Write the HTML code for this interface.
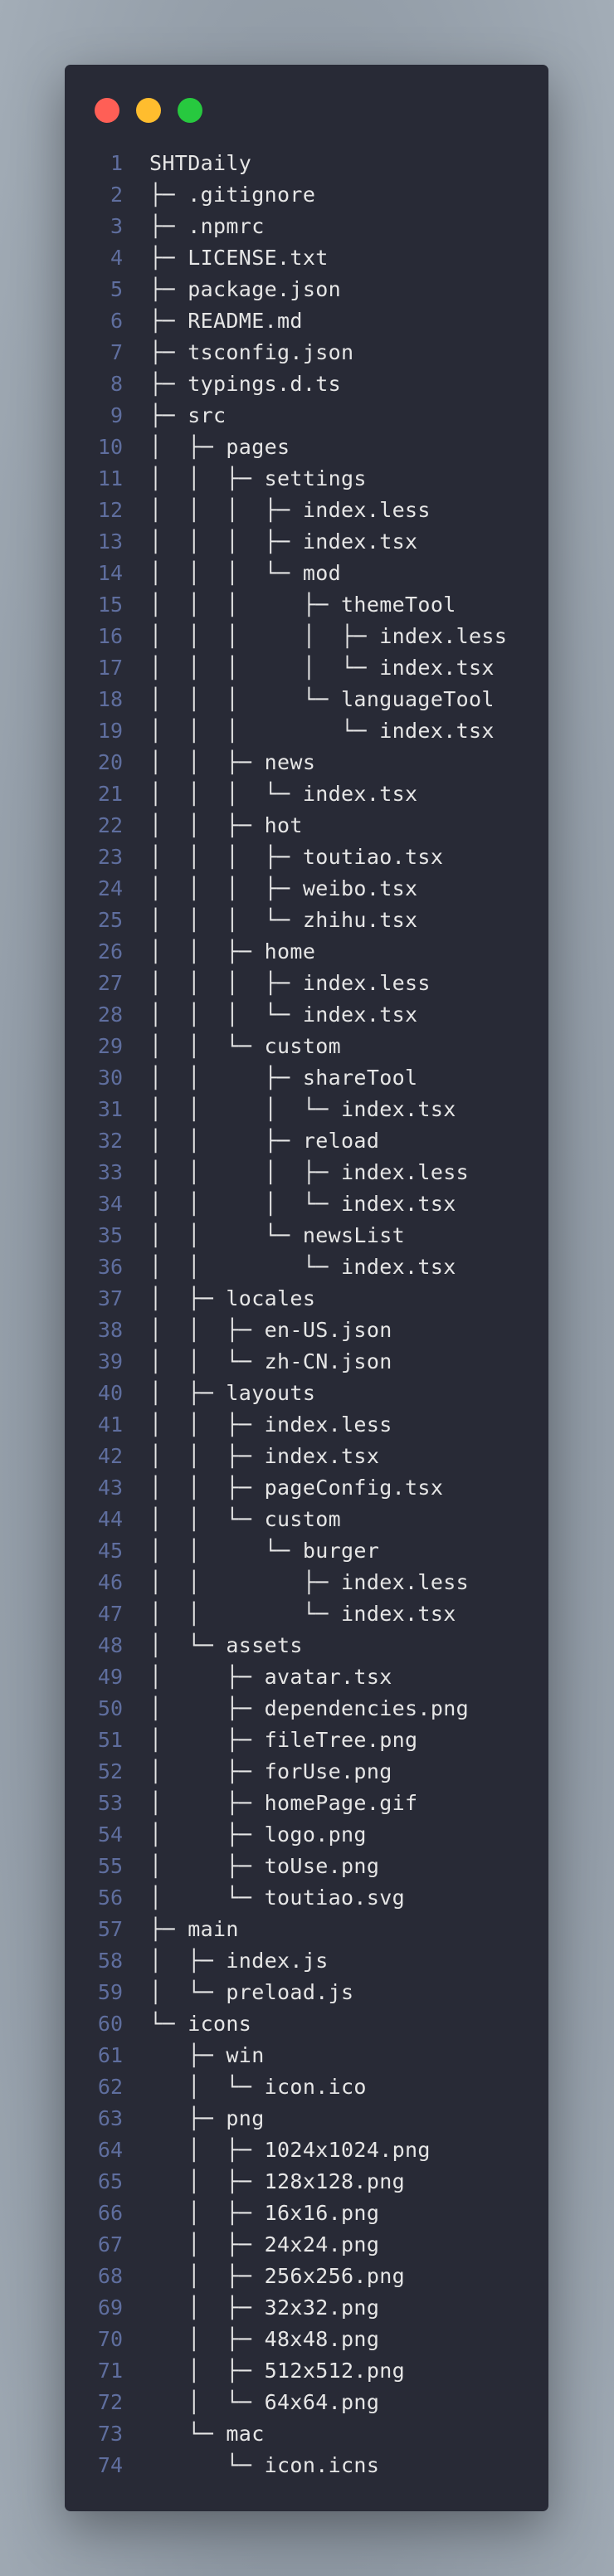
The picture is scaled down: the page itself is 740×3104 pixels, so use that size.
<!DOCTYPE html>
<html><head><meta charset="utf-8"><style>
html,body{margin:0;padding:0}
body{width:740px;height:3104px;background:radial-gradient(ellipse at 50% 55%,#7a828c 0%,#8e98a3 60%,#a3adb7 100%);position:relative;overflow:hidden}
.win{position:absolute;left:78px;top:78px;width:583px;height:2948px;background:#282a36;border-radius:7px;box-shadow:0 20px 60px rgba(0,0,0,.35)}
.dot{position:absolute;top:40px;width:30px;height:30px;border-radius:50%}
.code{position:absolute;left:0;top:100px;font-family:"DejaVu Sans Mono","Liberation Mono",monospace;font-size:25px;line-height:38px;white-space:pre;margin:0}
.ln{position:absolute;left:0;width:70px;text-align:right;color:#5f6e9e}
.tx{position:absolute;left:102px;color:#e6e6e6;letter-spacing:0.35px}
</style></head><body>
<div class="win">
<div class="dot" style="left:36px;background:#ff5f56"></div>
<div class="dot" style="left:86px;background:#ffbd2e"></div>
<div class="dot" style="left:136px;background:#27c93f"></div>
<pre class="code ln">1
2
3
4
5
6
7
8
9
10
11
12
13
14
15
16
17
18
19
20
21
22
23
24
25
26
27
28
29
30
31
32
33
34
35
36
37
38
39
40
41
42
43
44
45
46
47
48
49
50
51
52
53
54
55
56
57
58
59
60
61
62
63
64
65
66
67
68
69
70
71
72
73
74</pre>
<pre class="code tx">SHTDaily
├─ .gitignore
├─ .npmrc
├─ LICENSE.txt
├─ package.json
├─ README.md
├─ tsconfig.json
├─ typings.d.ts
├─ src
│  ├─ pages
│  │  ├─ settings
│  │  │  ├─ index.less
│  │  │  ├─ index.tsx
│  │  │  └─ mod
│  │  │     ├─ themeTool
│  │  │     │  ├─ index.less
│  │  │     │  └─ index.tsx
│  │  │     └─ languageTool
│  │  │        └─ index.tsx
│  │  ├─ news
│  │  │  └─ index.tsx
│  │  ├─ hot
│  │  │  ├─ toutiao.tsx
│  │  │  ├─ weibo.tsx
│  │  │  └─ zhihu.tsx
│  │  ├─ home
│  │  │  ├─ index.less
│  │  │  └─ index.tsx
│  │  └─ custom
│  │     ├─ shareTool
│  │     │  └─ index.tsx
│  │     ├─ reload
│  │     │  ├─ index.less
│  │     │  └─ index.tsx
│  │     └─ newsList
│  │        └─ index.tsx
│  ├─ locales
│  │  ├─ en-US.json
│  │  └─ zh-CN.json
│  ├─ layouts
│  │  ├─ index.less
│  │  ├─ index.tsx
│  │  ├─ pageConfig.tsx
│  │  └─ custom
│  │     └─ burger
│  │        ├─ index.less
│  │        └─ index.tsx
│  └─ assets
│     ├─ avatar.tsx
│     ├─ dependencies.png
│     ├─ fileTree.png
│     ├─ forUse.png
│     ├─ homePage.gif
│     ├─ logo.png
│     ├─ toUse.png
│     └─ toutiao.svg
├─ main
│  ├─ index.js
│  └─ preload.js
└─ icons
   ├─ win
   │  └─ icon.ico
   ├─ png
   │  ├─ 1024x1024.png
   │  ├─ 128x128.png
   │  ├─ 16x16.png
   │  ├─ 24x24.png
   │  ├─ 256x256.png
   │  ├─ 32x32.png
   │  ├─ 48x48.png
   │  ├─ 512x512.png
   │  └─ 64x64.png
   └─ mac
      └─ icon.icns</pre>
</div>
</body></html>
